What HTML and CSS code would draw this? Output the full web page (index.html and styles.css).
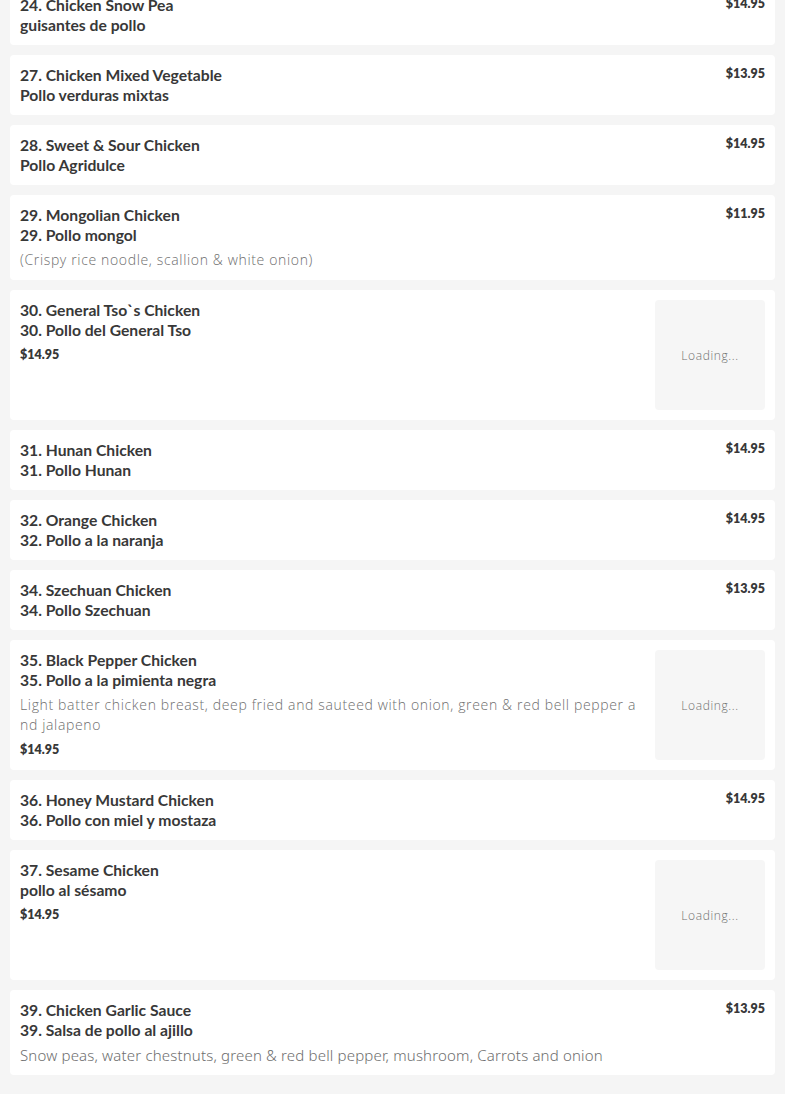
FILE: index.html
```html
<!DOCTYPE html>
<html lang="en">
<head>
<meta charset="utf-8">
<title>Menu</title>
<link rel="stylesheet" href="styles.css">
</head>
<body>
<div class="list">
  <div class="card">
    <div class="info"><div class="title">24. Chicken Snow Pea<br>guisantes de pollo</div></div>
    <div class="price top">$14.95</div>
  </div>
  <div class="card">
    <div class="info"><div class="title">27. Chicken Mixed Vegetable<br>Pollo verduras mixtas</div></div>
    <div class="price top">$13.95</div>
  </div>
  <div class="card">
    <div class="info"><div class="title">28. Sweet &amp; Sour Chicken<br>Pollo Agridulce</div></div>
    <div class="price top">$14.95</div>
  </div>
  <div class="card">
    <div class="info"><div class="title">29. Mongolian Chicken<br>29. Pollo mongol</div>
      <div class="desc">(Crispy rice noodle, scallion &amp; white onion)</div></div>
    <div class="price top">$11.95</div>
  </div>
  <div class="card">
    <div class="info"><div class="title">30. General Tso`s Chicken<br>30. Pollo del General Tso</div>
      <div class="price">$14.95</div></div>
    <div class="thumb">Loading...</div>
  </div>
  <div class="card">
    <div class="info"><div class="title">31. Hunan Chicken<br>31. Pollo Hunan</div></div>
    <div class="price top">$14.95</div>
  </div>
  <div class="card">
    <div class="info"><div class="title">32. Orange Chicken<br>32. Pollo a la naranja</div></div>
    <div class="price top">$14.95</div>
  </div>
  <div class="card">
    <div class="info"><div class="title">34. Szechuan Chicken<br>34. Pollo Szechuan</div></div>
    <div class="price top">$13.95</div>
  </div>
  <div class="card">
    <div class="info"><div class="title">35. Black Pepper Chicken<br>35. Pollo a la pimienta negra</div>
      <div class="desc">Light batter chicken breast, deep fried and sauteed with onion, green &amp; red bell pepper and jalapeno</div>
      <div class="price">$14.95</div></div>
    <div class="thumb">Loading...</div>
  </div>
  <div class="card">
    <div class="info"><div class="title">36. Honey Mustard Chicken<br>36. Pollo con miel y mostaza</div></div>
    <div class="price top">$14.95</div>
  </div>
  <div class="card">
    <div class="info"><div class="title">37. Sesame Chicken<br>pollo al sésamo</div>
      <div class="price">$14.95</div></div>
    <div class="thumb">Loading...</div>
  </div>
  <div class="card">
    <div class="info"><div class="title">39. Chicken Garlic Sauce<br>39. Salsa de pollo al ajillo</div>
      <div class="desc alt">Snow peas, water chestnuts, green &amp; red bell pepper, mushroom, Carrots and onion</div></div>
    <div class="price top">$13.95</div>
  </div>
</div>
</body>
</html>
```

FILE: styles.css
```css
html, body {
  margin: 0;
  padding: 0;
  background: #f5f5f5;
}
body {
  font-family: "Lato", "Liberation Sans", sans-serif;
  color: #333;
}
.list {
  display: flex;
  flex-direction: column;
  gap: 10px;
  padding: 0 10px 10px;
  margin-top: -15px;
}
.card {
  background: #fff;
  border-radius: 4px;
  padding: 10px;
  display: flex;
  gap: 10px;
  align-items: flex-start;
}
.info {
  flex: 1;
  min-width: 0;
}
.title {
  font-family: "Lato", sans-serif;
  font-weight: 700;
  font-size: 15.7px;
  line-height: 20px;
  color: #383838;
}
.desc {
  font-family: "Open Sans", sans-serif;
  font-weight: 300;
  font-size: 14px;
  letter-spacing: 0.65px;
  line-height: 20px;
  color: #6e6e6e;
  margin-top: 5px;
  word-break: break-all;
  padding-right: 6px;
}
.desc.alt {
  font-family: "Noto Sans", sans-serif;
  font-weight: 300;
  font-size: 15px;
  letter-spacing: 0.17px;
}
.price {
  font-family: "Lato", sans-serif;
  font-weight: 800;
  font-size: 12.5px;
  line-height: 20px;
  color: #383838;
  margin-top: 5px;
}
.price.top {
  margin-top: -1px;
}
.thumb {
  width: 110px;
  height: 110px;
  flex: none;
  background: #f6f6f6;
  border-radius: 4px;
  display: flex;
  align-items: center;
  justify-content: center;
  font-family: "Open Sans", sans-serif;
  font-weight: 300;
  font-size: 12px;
  letter-spacing: 0.6px;
  color: #707070;
}
```
